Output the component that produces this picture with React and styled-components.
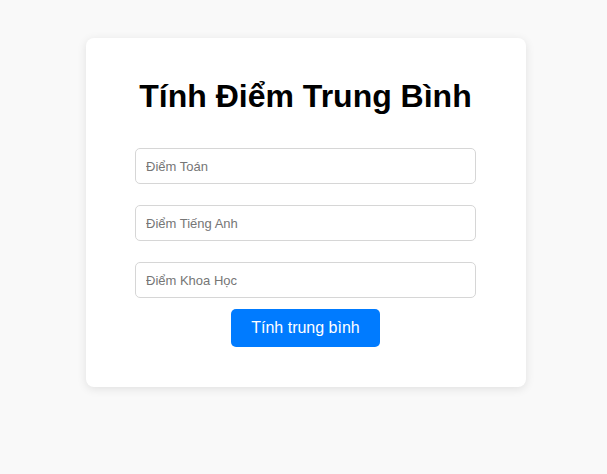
import React from "react";
import styled, { createGlobalStyle } from "styled-components";

const Global = createGlobalStyle`
  html, body { margin: 0; padding: 0; background: #f9f9f9; }
  body { font-family: "Liberation Sans", Arial, sans-serif; }
`;

const Page = styled.div`
  display: flex;
  justify-content: center;
  align-items: flex-start;
  padding: 38px 0 0 5px;
  min-height: 474px;
  box-sizing: border-box;
`;

const Card = styled.div`
  width: 440px;
  box-sizing: border-box;
  background: #ffffff;
  border-radius: 8px;
  box-shadow: 0 2px 10px rgba(0, 0, 0, 0.1);
  padding: 40px 50px 40px 49px;
  display: flex;
  flex-direction: column;
  align-items: center;
`;

const Title = styled.h1`
  margin: 0 0 33px;
  font-size: 32px;
  line-height: 37px;
  font-weight: 700;
  color: #000;
`;

const Fields = styled.div`
  display: flex;
  flex-direction: column;
  gap: 21px;
  width: 100%;
`;

const Input = styled.input`
  width: 100%;
  height: 36px;
  box-sizing: border-box;
  padding: 0 10px;
  border: 1px solid #d6d6d6;
  border-radius: 5px;
  font-family: "Liberation Sans", Arial, sans-serif;
  font-size: 13px;
  color: #333;
  outline: none;
  &::placeholder { color: #767676; }
`;

const Button = styled.button`
  margin-top: 11px;
  height: 38px;
  padding: 0 20px;
  border: none;
  border-radius: 5px;
  background: #007bff;
  color: #fff;
  font-family: "Liberation Sans", Arial, sans-serif;
  font-size: 16px;
  cursor: pointer;
`;

export default function App() {
  return (
    <>
      <Global />
      <Page>
        <Card>
          <Title>Tính Điểm Trung Bình</Title>
          <Fields>
            <Input type="number" placeholder="Điểm Toán" />
            <Input type="number" placeholder="Điểm Tiếng Anh" />
            <Input type="number" placeholder="Điểm Khoa Học" />
          </Fields>
          <Button>Tính trung bình</Button>
        </Card>
      </Page>
    </>
  );
}
